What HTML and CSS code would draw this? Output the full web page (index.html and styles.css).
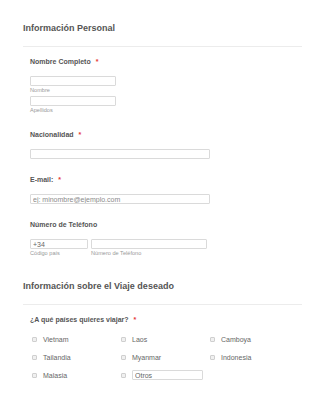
FILE: index.html
```html
<!DOCTYPE html>
<html lang="es">
<head>
    <meta charset="UTF-8">
    <meta name="viewport" content="width=device-width, initial-scale=1.0">
    <title>Formulario de Viaje</title>
    <link rel="stylesheet" href="styles.css">
</head>
<body>
    <div class="form">
        <div class="section-head">
            <h2>Información Personal</h2>
        </div>

        <div class="field">
            <label class="field-label">Nombre Completo <span class="req">*</span></label>
            <div class="sub">
                <input class="input short" type="text">
                <span class="sub-label">Nombre</span>
            </div>
            <div class="sub sub-next">
                <input class="input short" type="text">
                <span class="sub-label">Apellidos</span>
            </div>
        </div>

        <div class="field">
            <label class="field-label">Nacionalidad <span class="req">*</span></label>
            <input class="input wide" type="text">
        </div>

        <div class="field">
            <label class="field-label">E-mail: <span class="req">*</span></label>
            <input class="input wide" type="text" placeholder="ej: minombre@ejemplo.com">
        </div>

        <div class="field">
            <label class="field-label">Número de Teléfono</label>
            <div class="phone">
                <div class="sub">
                    <input class="input code" type="text" value="+34">
                    <span class="sub-label">Código país</span>
                </div>
                <div class="sub">
                    <input class="input number" type="text">
                    <span class="sub-label">Número de Teléfono</span>
                </div>
            </div>
        </div>

        <div class="section-head second">
            <h2>Información sobre el Viaje deseado</h2>
        </div>

        <div class="field">
            <label class="field-label">¿A qué países quieres viajar? <span class="req">*</span></label>
            <div class="checks">
                <label class="check"><input type="checkbox"><span>Vietnam</span></label>
                <label class="check"><input type="checkbox"><span>Laos</span></label>
                <label class="check"><input type="checkbox"><span>Camboya</span></label>
                <label class="check"><input type="checkbox"><span>Tailandia</span></label>
                <label class="check"><input type="checkbox"><span>Myanmar</span></label>
                <label class="check"><input type="checkbox"><span>Indonesia</span></label>
                <label class="check"><input type="checkbox"><span>Malasia</span></label>
                <label class="check"><input type="checkbox"><input class="input other" type="text" value="Otros"></label>
            </div>
        </div>
    </div>
</body>
</html>
```

FILE: styles.css
```css
body {
    font-family: "Liberation Sans", Arial, sans-serif;
    margin: 0;
    background: #fff;
    color: #555;
}
.form {
    width: 279px;
    margin-left: 23px;
}
.section-head {
    padding-top: 22px;
    padding-bottom: 11px;
    border-bottom: 1px solid #ececec;
}
.section-head h2 {
    margin: 0;
    font-size: 9px;
    line-height: 13px;
    font-weight: bold;
    color: #555;
}
.section-head.second {
    padding-top: 17px;
}
.field {
    padding: 10px 7px 6px;
}
.field-label {
    display: block;
    font-size: 7px;
    line-height: 10px;
    font-weight: bold;
    color: #555;
    margin-bottom: 9px;
}
.req {
    color: #e53935;
    margin-left: 3px;
}
.sub {
    display: flex;
    flex-direction: column;
}
.sub-next {
    margin-top: 2px;
}
.sub-label {
    font-size: 5.6px;
    line-height: 8px;
    color: #999;
}
.input {
    display: block;
    box-sizing: border-box;
    height: 10px;
    border: 1px solid #dadada;
    border-radius: 1px;
    padding: 0 2px;
    margin: 0;
    font-family: "Liberation Sans", Arial, sans-serif;
    font-size: 7px;
    color: #666;
    outline: none;
}
.input::placeholder {
    color: #8a8a8a;
}
.short {
    width: 86px;
}
.wide {
    width: 180px;
}
.phone {
    display: flex;
    gap: 3px;
}
.code {
    width: 58px;
}
.number {
    width: 116px;
}
.checks {
    display: grid;
    grid-template-columns: 89px 89px 80px;
    row-gap: 8px;
    padding-left: 2px;
}
.check {
    display: flex;
    align-items: center;
    height: 10px;
    font-size: 7px;
    color: #666;
}
.check input[type="checkbox"] {
    appearance: none;
    width: 5px;
    height: 5px;
    margin: 0 6px 0 0;
    border: 1px solid #cfcfcf;
    background: #f0f0f0;
    border-radius: 1px;
    box-sizing: border-box;
}
.other {
    width: 71px;
}
```
